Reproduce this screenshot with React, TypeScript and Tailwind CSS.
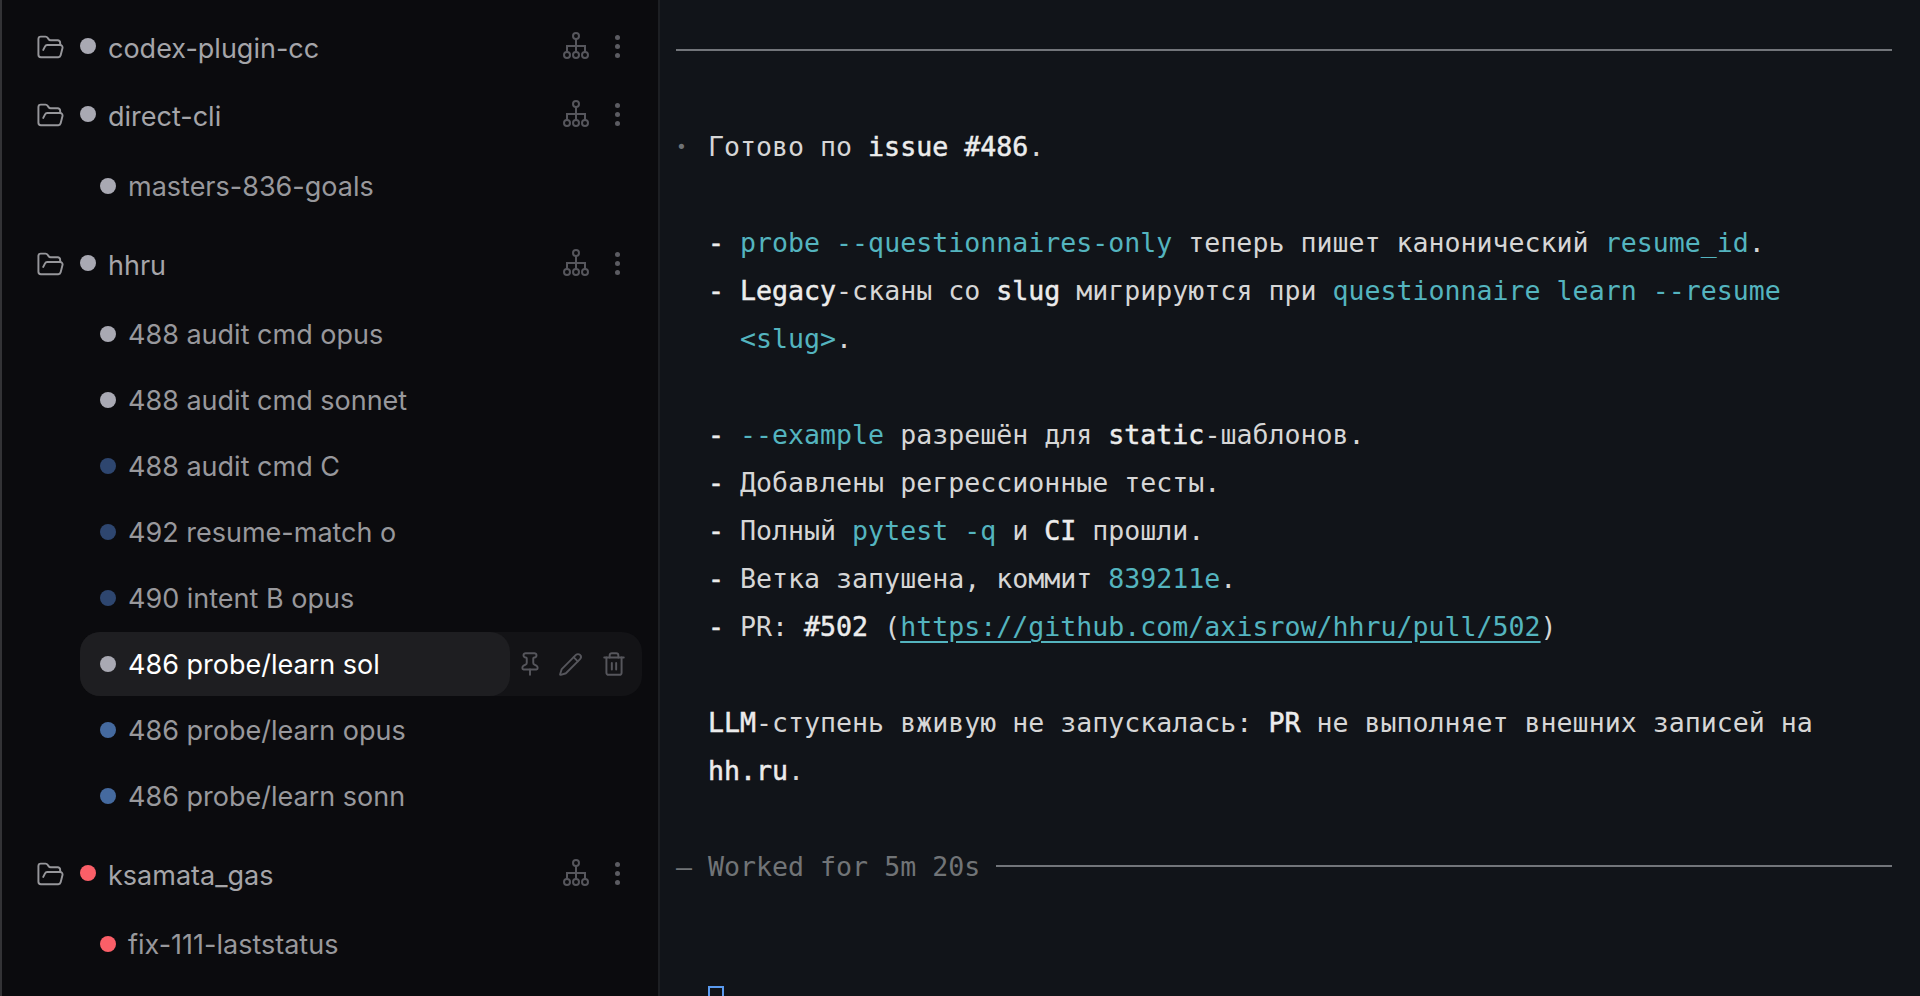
import React from "react";
import { FolderOpen, Pin, Pencil, Trash2 } from "lucide-react";

const Network = () => (
  <svg width="26" height="28" viewBox="0 0 26 28" fill="none" stroke="#56565c" strokeWidth="2" className="shrink-0 -mt-[2px]">
    <circle cx="13" cy="4" r="3" />
    <path d="M13 7v7M4 20v-6h18v6M13 14v6" />
    <circle cx="4" cy="23" r="3" />
    <circle cx="13" cy="23" r="3" />
    <circle cx="22" cy="23" r="3" />
  </svg>
);

const Kebab = () => (
  <div className="flex flex-col items-center gap-[4px] w-[6px] -mt-[2px]">
    <span className="w-[5px] h-[5px] rounded-full bg-[#5c5c62]" />
    <span className="w-[5px] h-[5px] rounded-full bg-[#5c5c62]" />
    <span className="w-[5px] h-[5px] rounded-full bg-[#5c5c62]" />
  </div>
);

const GRAY = "bg-[#a9a9b3]";
const DIM = "bg-[#2e466f]";
const BLUE = "bg-[#456a9f]";
const RED = "bg-[#fb5f68]";

const Project = ({ name, dot }: { name: string; dot: string }) => (
  <div className="h-[68px] flex items-center pl-[37px] pr-[38px] text-[#a5a5a9]">
    <FolderOpen size={29} strokeWidth={1.6} className="text-[#97979b] shrink-0 -ml-[1px]" />
    <span className={`w-4 h-4 rounded-full ml-[15px] -mt-[2px] shrink-0 ${dot}`} />
    <span className="ml-[12px] mt-[4px] flex-1">{name}</span>
    <div className="flex items-center gap-[25px]">
      <Network />
      <Kebab />
    </div>
  </div>
);

const Child = ({ name, dot }: { name: string; dot: string }) => (
  <div className="h-[66px] flex items-center pl-[100px] text-[#98989c]">
    <span className={`w-4 h-4 rounded-full shrink-0 ${dot}`} />
    <span className="ml-[12px] mt-[2px]">{name}</span>
  </div>
);

const Selected = ({ name }: { name: string }) => (
  <div className="h-[66px] flex items-center pl-[80px] pr-[16px]">
    <div className="h-[64px] flex-1 flex rounded-[20px] bg-[#131316]">
      <div className="w-[430px] h-full rounded-[20px] bg-[#1e1e21] flex items-center pl-[20px] text-white">
        <span className={`w-4 h-4 rounded-full shrink-0 ${GRAY}`} />
        <span className="ml-[12px] mt-[2px]">{name}</span>
      </div>
      <div className="flex items-center pl-[7px] gap-[15px] text-[#56565c]">
        <Pin size={26} strokeWidth={1.8} />
        <Pencil size={25} strokeWidth={1.8} />
        <Trash2 size={26} strokeWidth={1.8} className="ml-[3px]" />
      </div>
    </div>
  </div>
);

const C = ({ children }: { children: React.ReactNode }) => <span className="text-[#54b4bf]">{children}</span>;
const B = ({ children }: { children: React.ReactNode }) => (
  <span className="text-[#ececec] [-webkit-text-stroke:0.5px_#ececec]">{children}</span>
);

const Line = ({ children }: { children?: React.ReactNode }) => (
  <div className="h-[48px] leading-[50px] pl-[32px] whitespace-pre">{children}</div>
);

const Dash = () => <B>-</B>;

export default function App() {
  return (
    <div className="w-[1920px] h-[996px] overflow-hidden flex bg-[#111419]">
      <aside className="w-[660px] h-full shrink-0 bg-[#0b0b0e] border-l-[2px] border-l-[#333336] border-r-[2px] border-r-[#1d1f23] pt-[13px] text-[27px] font-['Inter',sans-serif]">
        <div className="-ml-[2px]">
          <Project name="codex-plugin-cc" dot={GRAY} />
          <Project name="direct-cli" dot={GRAY} />
          <div className="mt-[4px] mb-[11px]">
            <Child name="masters-836-goals" dot={GRAY} />
          </div>
          <Project name="hhru" dot={GRAY} />
          <div className="mt-[3px] mb-[11px]">
            <Child name="488 audit cmd opus" dot={GRAY} />
            <Child name="488 audit cmd sonnet" dot={GRAY} />
            <Child name="488 audit cmd C" dot={DIM} />
            <Child name="492 resume-match o" dot={DIM} />
            <Child name="490 intent B opus" dot={DIM} />
            <Selected name="486 probe/learn sol" />
            <Child name="486 probe/learn opus" dot={BLUE} />
            <Child name="486 probe/learn sonn" dot={BLUE} />
          </div>
          <Project name="ksamata_gas" dot={RED} />
          <div className="mt-[3px]">
            <Child name="fix-111-laststatus" dot={RED} />
          </div>
        </div>
      </aside>
      <main className="flex-1 min-w-0 pt-[26px] pl-[16px] pr-[28px] text-[26.6px] text-[#d6d6d6] font-['DejaVu_Sans_Mono',monospace]">
        <div className="h-[48px] flex items-center">
          <div className="h-[2px] w-full bg-[#72757a]" />
        </div>
        <Line />
        <div className="h-[48px] leading-[50px] flex whitespace-pre">
          <span className="w-[32px] text-[#6f7276] text-[18px]">•</span>
          <span>Готово по <B>issue #486</B>.</span>
        </div>
        <Line />
        <Line><Dash /> <C>probe --questionnaires-only</C> теперь пишет канонический <C>resume_id</C>.</Line>
        <Line><Dash /> <B>Legacy</B>-сканы со <B>slug</B> мигрируются при <C>questionnaire learn --resume</C></Line>
        <Line>  <C>{"<slug>"}</C>.</Line>
        <Line />
        <Line><Dash /> <C>--example</C> разрешён для <B>static</B>-шаблонов.</Line>
        <Line><Dash /> Добавлены регрессионные тесты.</Line>
        <Line><Dash /> Полный <C>pytest -q</C> и <B>CI</B> прошли.</Line>
        <Line><Dash /> Ветка запушена, коммит <C>839211e</C>.</Line>
        <Line><Dash /> PR: <B>#502</B> (<span className="text-[#54b4bf] underline underline-offset-[5px]">https://github.com/axisrow/hhru/pull/502</span>)</Line>
        <Line />
        <Line><B>LLM</B>-ступень вживую не запускалась: <B>PR</B> не выполняет внешних записей на</Line>
        <Line><B>hh.ru</B>.</Line>
        <Line />
        <div className="h-[48px] leading-[50px] flex items-center whitespace-pre text-[#717477]">
          <span className="mt-[2px]">— Worked for 5m 20s </span>
          <div className="h-[2px] flex-1 bg-[#72757a]" />
        </div>
        <Line />
        <Line />
        <div className="ml-[32px] w-[16px] h-[30px] border-2 border-[#5b9bf0]" />
      </main>
    </div>
  );
}
